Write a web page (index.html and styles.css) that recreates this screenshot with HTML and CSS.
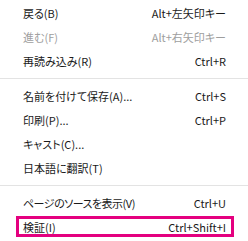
FILE: index.html
```html
<!DOCTYPE html>
<html lang="ja">
<head>
  <meta charset="UTF-8" />
  <title>コンテキストメニュー</title>
  <link rel="stylesheet" href="styles.css">
</head>
<body>
  <div class="menu">
    <div class="item"><span>戻る(B)</span><span>Alt+左矢印キー</span></div>
    <div class="item disabled"><span>進む(F)</span><span>Alt+右矢印キー</span></div>
    <div class="item"><span>再読み込み(R)</span><span>Ctrl+R</span></div>
    <div class="sep"></div>
    <div class="item"><span>名前を付けて保存(A)...</span><span>Ctrl+S</span></div>
    <div class="item"><span>印刷(P)...</span><span>Ctrl+P</span></div>
    <div class="item"><span>キャスト(C)...</span></div>
    <div class="item"><span>日本語に翻訳(T)</span></div>
    <div class="sep"></div>
    <div class="item"><span class="kana">ページのソースを表示(V)</span><span>Ctrl+U</span></div>
    <div class="item marked"><span>検証(I)</span><span>Ctrl+Shift+I</span></div>
  </div>
</body>
</html>
```

FILE: styles.css
```css
body {
  margin: 0;
  background: #fff;
  font-family: "Noto Sans CJK JP", "Noto Sans", sans-serif;
  font-size: 11px;
  font-feature-settings: "palt";
  color: #1a1a1a;
}
.menu {
  padding-top: 1px;
}
.item {
  display: flex;
  justify-content: space-between;
  align-items: center;
  height: 24px;
  padding: 0 22px 0 23px;
  position: relative;
  white-space: nowrap;
}
.kana {
  letter-spacing: -0.5px;
}
.disabled {
  color: #9e9e9e;
}
.sep {
  height: 1px;
  background: #e3e3e3;
  margin: 5px 0;
}
.marked::after {
  content: "";
  position: absolute;
  top: 1px;
  bottom: 2px;
  left: 16px;
  right: 14px;
  border: 3px solid #e4007f;
}
```
